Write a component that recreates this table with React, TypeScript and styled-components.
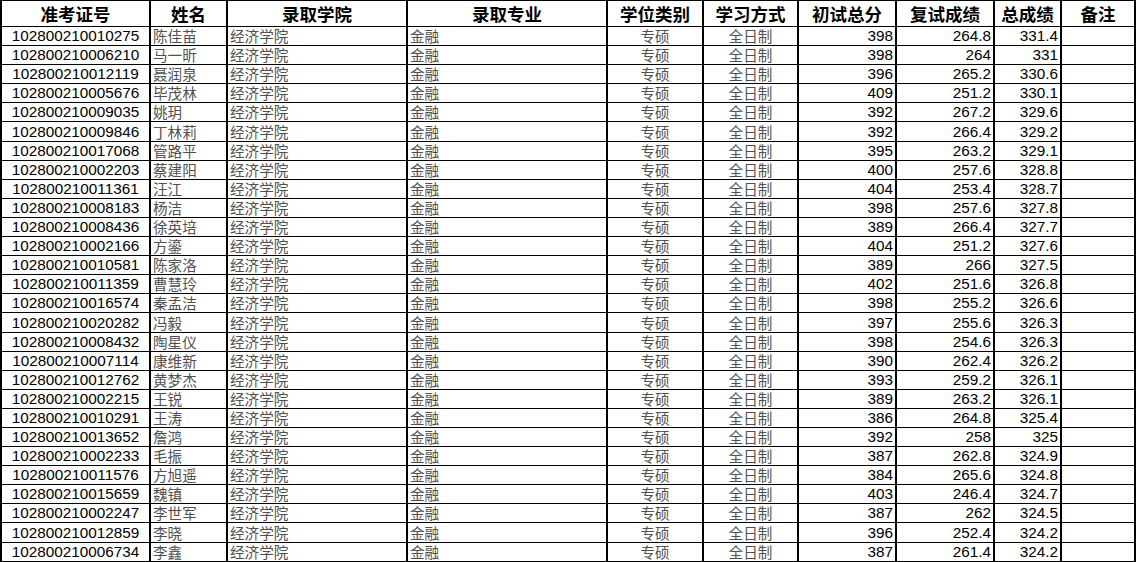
import styled, { createGlobalStyle } from "styled-components";

const GlobalStyle = createGlobalStyle`
  html, body {
    margin: 0;
    padding: 0;
    background: #ffffff;
  }
`;

const Sheet = styled.table`
  width: 1134px;
  table-layout: fixed;
  border-collapse: collapse;
  border-top: 1px solid #000;
  font-family: "Liberation Sans", Arial, "Noto Sans CJK SC", sans-serif;
`;

const HeadCell = styled.th`
  height: 25px;
  padding: 0;
  border-left: 2px solid #000;
  border-right: 2px solid #000;
  border-bottom: 1px solid #000;
  font-family: "Noto Sans CJK SC", sans-serif;
  font-size: 17.5px;
  font-weight: 700;
  color: #000;
  text-align: center;
  vertical-align: middle;
  line-height: 22px;
  white-space: nowrap;
`;

const Row = styled.tr`
  height: 19.1px;
`;

const Cell = styled.td<{ $align?: "left" | "center" | "right"; $cjk?: boolean }>`
  padding: 0 2px 1px 2px;
  border-left: 2px solid #000;
  border-right: 2px solid #000;
  border-bottom: 1px solid #000;
  text-align: ${({ $align }) => $align ?? "left"};
  vertical-align: bottom;
  white-space: nowrap;
  overflow: hidden;
  line-height: 17px;
  font-family: ${({ $cjk }) =>
    $cjk
      ? `"Noto Sans CJK SC", sans-serif`
      : `"Liberation Sans", Arial, sans-serif`};
  font-size: ${({ $cjk }) => ($cjk ? "14.6px" : "15.3px")};
  font-weight: 400;
  color: ${({ $cjk }) => ($cjk ? "#505050" : "#000")};
`;

const columns = [
  { title: "准考证号", width: 149 },
  { title: "姓名", width: 77 },
  { title: "录取学院", width: 180 },
  { title: "录取专业", width: 200 },
  { title: "学位类别", width: 96 },
  { title: "学习方式", width: 95 },
  { title: "初试总分", width: 98 },
  { title: "复试成绩", width: 98 },
  { title: "总成绩", width: 67 },
  { title: "备注", width: 74 },
];

const rows: [string, string, string, string, string][] = [
  ["102800210010275", "陈佳苗", "398", "264.8", "331.4"],
  ["102800210006210", "马一昕", "398", "264", "331"],
  ["102800210012119", "聂润泉", "396", "265.2", "330.6"],
  ["102800210005676", "毕茂林", "409", "251.2", "330.1"],
  ["102800210009035", "姚玥", "392", "267.2", "329.6"],
  ["102800210009846", "丁林莉", "392", "266.4", "329.2"],
  ["102800210017068", "管路平", "395", "263.2", "329.1"],
  ["102800210002203", "蔡建阳", "400", "257.6", "328.8"],
  ["102800210011361", "汪江", "404", "253.4", "328.7"],
  ["102800210008183", "杨洁", "398", "257.6", "327.8"],
  ["102800210008436", "徐英培", "389", "266.4", "327.7"],
  ["102800210002166", "方鎏", "404", "251.2", "327.6"],
  ["102800210010581", "陈家洛", "389", "266", "327.5"],
  ["102800210011359", "曹慧玲", "402", "251.6", "326.8"],
  ["102800210016574", "秦孟洁", "398", "255.2", "326.6"],
  ["102800210020282", "冯毅", "397", "255.6", "326.3"],
  ["102800210008432", "陶星仪", "398", "254.6", "326.3"],
  ["102800210007114", "康维新", "390", "262.4", "326.2"],
  ["102800210012762", "黄梦杰", "393", "259.2", "326.1"],
  ["102800210002215", "王锐", "389", "263.2", "326.1"],
  ["102800210010291", "王涛", "386", "264.8", "325.4"],
  ["102800210013652", "詹鸿", "392", "258", "325"],
  ["102800210002233", "毛振", "387", "262.8", "324.9"],
  ["102800210011576", "方旭遥", "384", "265.6", "324.8"],
  ["102800210015659", "魏镇", "403", "246.4", "324.7"],
  ["102800210002247", "李世军", "387", "262", "324.5"],
  ["102800210012859", "李晓", "396", "252.4", "324.2"],
  ["102800210006734", "李鑫", "387", "261.4", "324.2"],
];

export default function App() {
  return (
    <>
      <GlobalStyle />
      <Sheet>
        <colgroup>
          {columns.map((c) => (
            <col key={c.title} style={{ width: c.width }} />
          ))}
        </colgroup>
        <thead>
          <tr>
            {columns.map((c) => (
              <HeadCell key={c.title}>{c.title}</HeadCell>
            ))}
          </tr>
        </thead>
        <tbody>
          {rows.map(([id, name, first, second, total]) => (
            <Row key={id}>
              <Cell $align="center">{id}</Cell>
              <Cell $cjk>{name}</Cell>
              <Cell $cjk>经济学院</Cell>
              <Cell $cjk>金融</Cell>
              <Cell $cjk $align="center">专硕</Cell>
              <Cell $cjk $align="center">全日制</Cell>
              <Cell $align="right">{first}</Cell>
              <Cell $align="right">{second}</Cell>
              <Cell $align="right">{total}</Cell>
              <Cell />
            </Row>
          ))}
          <Row>
            {columns.map((c) => (
              <Cell key={c.title} />
            ))}
          </Row>
        </tbody>
      </Sheet>
    </>
  );
}
